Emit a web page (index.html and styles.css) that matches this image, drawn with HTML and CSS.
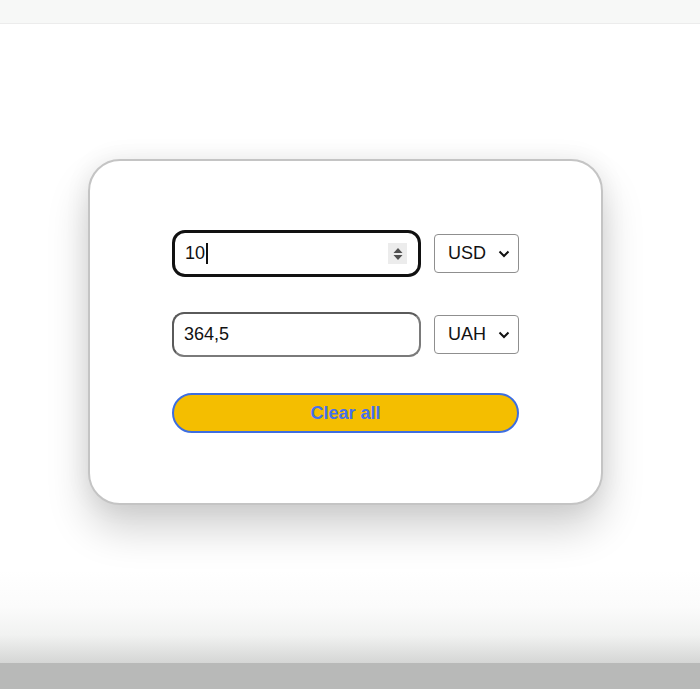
FILE: index.html
```html
<!DOCTYPE html>
<html lang="en">
<head>
<meta charset="utf-8">
<title>Converter</title>
<link rel="stylesheet" href="styles.css">
</head>
<body>
<div class="topbar"></div>
<main class="main">
  <section class="card">
    <div class="row">
      <div class="field field-focus">
        <span class="value">10</span><span class="caret"></span>
        <span class="spinner">
          <svg width="12" height="18" viewBox="0 0 12 18"><path d="M6 3 L10.5 8 L1.5 8 Z" fill="#505050"/><path d="M1.5 10 L10.5 10 L6 15 Z" fill="#505050"/></svg>
        </span>
      </div>
      <div class="select">
        <span>USD</span>
        <svg class="chev" width="12" height="8" viewBox="0 0 12 8"><path d="M1.5 1.5 L6 6 L10.5 1.5" fill="none" stroke="#111" stroke-width="2"/></svg>
      </div>
    </div>
    <div class="row">
      <div class="field field-plain">
        <span class="value">364,5</span>
      </div>
      <div class="select">
        <span>UAH</span>
        <svg class="chev" width="12" height="8" viewBox="0 0 12 8"><path d="M1.5 1.5 L6 6 L10.5 1.5" fill="none" stroke="#111" stroke-width="2"/></svg>
      </div>
    </div>
    <button class="clear">Clear all</button>
  </section>
</main>
<div class="fade"></div>
<div class="bottombar"></div>
</body>
</html>
```
FILE: styles.css
```css
html, body {
  margin: 0;
  padding: 0;
  height: 100%;
}
body {
  display: flex;
  flex-direction: column;
  background: #ffffff;
  font-family: "Liberation Sans", Arial, sans-serif;
  overflow: hidden;
}
.topbar {
  height: 23px;
  flex: none;
  background: #f7f8f7;
  border-bottom: 1px solid #ececec;
}
.main {
  flex: 1;
  padding-top: 135px;
  padding-left: 88px;
}
.card {
  box-sizing: border-box;
  width: 515px;
  height: 346px;
  border: 2px solid #c4c4c4;
  border-radius: 32px;
  background: #fff;
  box-shadow: 0 24px 42px rgba(0, 0, 0, 0.18), 0 0 26px rgba(0, 0, 0, 0.07);
  padding: 69px 82px 0 82px;
  display: flex;
  flex-direction: column;
}
.row {
  display: flex;
  align-items: center;
  gap: 13px;
  height: 47px;
}
.row + .row {
  margin-top: 34px;
}
.field {
  box-sizing: border-box;
  width: 249px;
  display: flex;
  align-items: center;
  padding-left: 10px;
  font-size: 18px;
  color: #111;
  position: relative;
}
.field-focus {
  height: 47px;
  border: 3px solid #111;
  border-radius: 13px;
}
.field-plain {
  height: 45px;
  border: 2px solid #5a5a5a;
  border-bottom-color: #7a7a7a;
  border-right-color: #7a7a7a;
  border-radius: 12px;
}
.caret {
  display: inline-block;
  width: 2px;
  height: 21px;
  background: #111;
  margin-left: 1px;
}
.spinner {
  position: absolute;
  right: 11px;
  top: 10px;
  width: 19px;
  height: 21px;
  background: #ececec;
  display: flex;
  align-items: center;
  justify-content: center;
}
.select {
  box-sizing: border-box;
  width: 85px;
  height: 39px;
  border: 1px solid #8f8f8f;
  border-radius: 4px;
  display: flex;
  align-items: center;
  justify-content: space-between;
  padding: 0 8px 0 13px;
  font-size: 18px;
  color: #111;
}
.chev {
  display: block;
}
.clear {
  box-sizing: border-box;
  margin-top: 35px;
  width: 347px;
  height: 40px;
  border: 2px solid #3d6ee0;
  border-radius: 20px;
  background: #f4be00;
  color: #4570ec;
  font-family: "Liberation Sans", Arial, sans-serif;
  font-weight: bold;
  font-size: 18px;
  padding: 0;
}
.fade {
  height: 93px;
  flex: none;
  background: linear-gradient(to bottom, #ffffff 0%, #fbfbfb 40%, #f1f2f1 70%, #d5d6d5 100%);
}
.bottombar {
  height: 26px;
  flex: none;
  background: #b8b9b8;
}
```
